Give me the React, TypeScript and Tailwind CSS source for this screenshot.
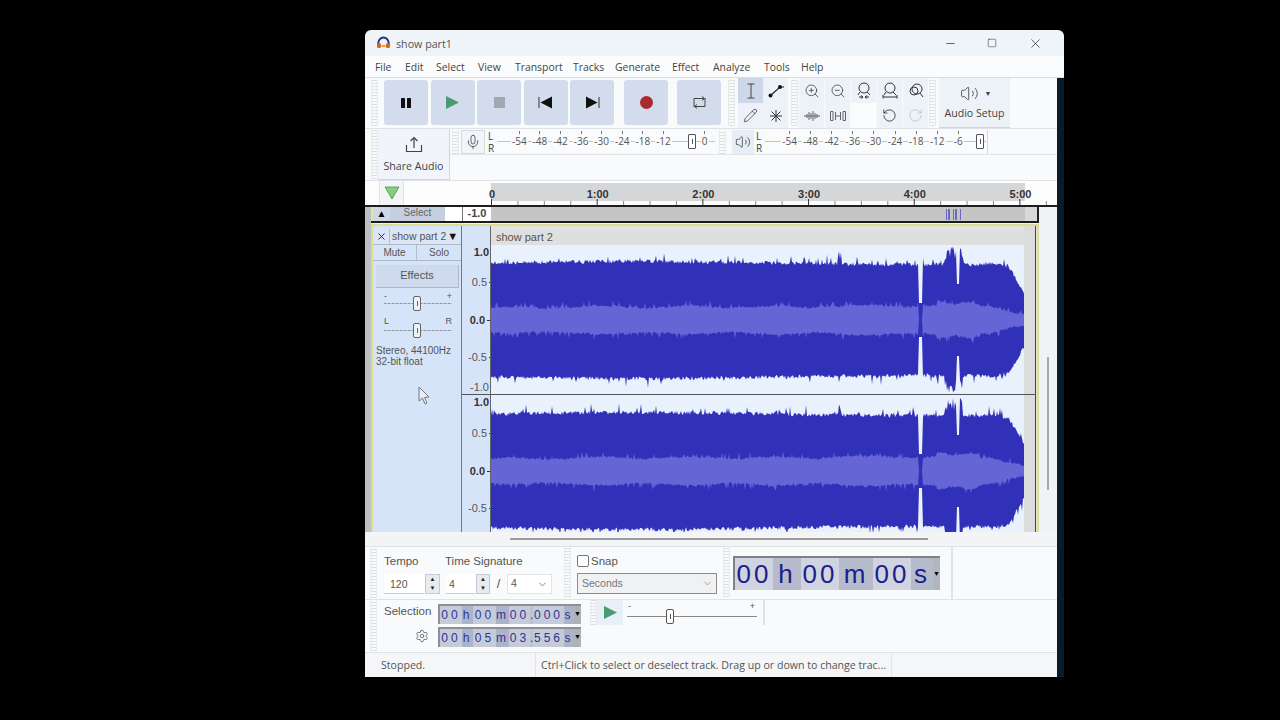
import React from 'react';
import { Mic, Pencil, RotateCcw, RotateCw, Settings, Volume2, X, ZoomIn, ZoomOut, ChevronDown, Square, Minus } from 'lucide-react';

const menus = [
  { label: 'File', w: 30 },
  { label: 'Edit', w: 31 },
  { label: 'Select', w: 42 },
  { label: 'View', w: 37 },
  { label: 'Transport', w: 58 },
  { label: 'Tracks', w: 42 },
  { label: 'Generate', w: 57 },
  { label: 'Effect', w: 41 },
  { label: 'Analyze', w: 51 },
  { label: 'Tools', w: 37 },
  { label: 'Help', w: 30 },
];

function mulberry(seed: number) {
  return () => {
    seed |= 0;
    seed = (seed + 0x6d2b79f5) | 0;
    let t = Math.imul(seed ^ (seed >>> 15), 1 | seed);
    t = (t + Math.imul(t ^ (t >>> 7), 61 | t)) ^ t;
    return ((t ^ (t >>> 14)) >>> 0) / 4294967296;
  };
}

// rough peak + rms shape of the song, one value per pixel column
function buildWave(seed: number, cy: number) {
  const r = mulberry(seed);
  const outer = (i: number, side: number) => {
    let a = 55 + Math.sin(i / 90) * 1.5 + r() * 4;
    if (r() < 0.08) a += 2 + r() * 6;
    if (i > 347 && i < 351 && side < 0) a += 12 * r();
    if (i >= 428 && i <= 431) return 17;
    if (i >= 454 && i <= 471) a = 60 + r() * 14;
    if (i >= 466 && i <= 468) a = 36;
    if (i > 505) a -= (i - 505) * 0.25;
    if (i > 518) a -= (i - 518) * 1.5;
    return a;
  };
  const inner = (i: number) => {
    let a = 11 + r() * 2.5 + Math.sin(i / 14) * 1;
    if (i > 60) a += 1;
    if (i > 330) a += 1;
    if (r() < 0.1) a += 2 + r() * 4;
    if (i >= 428 && i <= 431) return 0;
    if (i > 445 && i < 490) a += 2 + Math.sin(i / 5) * 1.5;
    if (i > 500) a -= (i - 500) * 0.28;
    return Math.max(a, 2);
  };
  let up = '';
  let down = '';
  let rUp = '';
  let rDown = '';
  for (let i = 0; i < 534; i++) {
    up += `${i === 0 ? 'M' : 'L'}${i} ${(cy - outer(i, -1)).toFixed(1)} `;
    down = `L${i} ${(cy + outer(i, 1)).toFixed(1)} ` + down;
    rUp += `${i === 0 ? 'M' : 'L'}${i} ${(cy - inner(i)).toFixed(1)} `;
    rDown = `L${i} ${(cy + inner(i)).toFixed(1)} ` + rDown;
  }
  return { peak: up + down + 'Z', rms: rUp + rDown + 'Z' };
}

const Wave = ({ seed, cy, h }: { seed: number; cy: number; h: number }) => {
  const { peak, rms } = React.useMemo(() => buildWave(seed, cy), [seed, cy]);
  return (
    <svg width={534} height={h} viewBox={`0 0 534 ${h}`} className="block bg-[#e9f1fc]">
      <path d={peak} fill="#3030b9" />
      <path d={rms} fill="#6565d6" />
    </svg>
  );
};

const Grip = ({ h = 'h-[46px]' }: { h?: string }) => (
  <div className={`w-[7px] shrink-0 bg-[repeating-linear-gradient(0deg,#dcdfe3_0px,#dcdfe3_1px,#f8fafc_1px,#f8fafc_3px)] border-x border-[#e8eaee] ${h}`} />
);

const TransportBtn = ({ children, className = '' }: { children: React.ReactNode; className?: string }) => (
  <div className={`w-11 h-[45px] rounded-[3px] bg-[#d3dcec] flex items-center justify-center shrink-0 ${className}`}>{children}</div>
);

const ToolBtn = ({ children, active }: { children?: React.ReactNode; active?: boolean }) => (
  <div className={`w-[25px] h-[25px] flex items-center justify-center ${active ? 'bg-[#cdd7ea]' : 'bg-[#edf2f9]'}`}>{children}</div>
);

const Meter = ({ labels, w, slider, pad }: { labels: string[]; w: string; slider: string; pad: string }) => (
  <div className={`relative h-[22px] ${w} bg-[#fafbfc]`}>
    <div className="absolute left-0 right-0 top-[11px] h-px bg-[#c2c4c7]" />
    <div className={`relative flex ${pad}`}>
      {labels.map((l, i) => (
        <div key={i} className="w-[21.1px] flex flex-col items-center pt-[1px]">
          <div className={`w-px h-[3px] ${l ? 'bg-[#777]' : 'bg-transparent'}`} />
          <span className="text-[10px] leading-[14px] text-[#555] bg-[#fafbfc] px-px">{l}</span>
        </div>
      ))}
    </div>
    <div className={`absolute top-[4px] w-[8px] h-[15px] border border-[#555] rounded-[1px] bg-white flex items-center justify-center ${slider}`}>
      <div className="w-px h-[5px] bg-[#555]" />
    </div>
  </div>
);

const LR = () => (
  <div className="w-[9px] text-[10px] leading-[12px] text-[#444] flex flex-col">
    <span>L</span>
    <span>R</span>
  </div>
);

const PanelSlider = ({ mt }: { mt: string }) => (
  <div className={`relative h-[16px] mx-[11px] w-[68px] ${mt}`}>
    <div className="absolute left-0 right-0 top-[8px] h-px bg-[repeating-linear-gradient(90deg,#8f959c_0px,#8f959c_2px,#b8c2d0_2px,#b8c2d0_4px)]" />
    <div className="absolute left-[29px] top-[1px] w-[8px] h-[15px] rounded-[2px] border border-[#666] bg-[#eef2f7] flex items-center justify-center">
      <div className="w-px h-[5px] bg-[#666]" />
    </div>
  </div>
);

const RulerLabel = ({ text, mt = '', strong, tick }: { text: string; mt?: string; strong?: boolean; tick?: string }) => (
  <div className={`h-[14px] flex items-center justify-end ${mt}`}>
    <span className={`text-[11px] leading-[14px] pr-[2px] ${strong ? 'font-bold text-[#333]' : 'text-[#555]'}`}>{text}</span>
    {tick ? <div className={`h-px bg-[#333] ${tick}`} /> : null}
  </div>
);

const seg = {
  light: 'bg-[#d0d3e0]',
  dark: 'bg-[#b5bbcb]',
};

const bigSegs = [
  { t: '00', w: 'w-[38px]', c: seg.light },
  { t: 'h', w: 'w-[28px]', c: seg.dark },
  { t: '00', w: 'w-[38px]', c: seg.light },
  { t: 'm', w: 'w-[34px]', c: seg.dark },
  { t: '00', w: 'w-[38px]', c: seg.light },
  { t: 's', w: 'w-[22px]', c: seg.dark },
];

const smallRow = (v: string[]) => [
  { t: v[0], w: 'w-[22px]', c: 'bg-[#c6cbd9]' },
  { t: 'h', w: 'w-[11px]', c: 'bg-[#adb4c9]' },
  { t: v[1], w: 'w-[23px]', c: 'bg-[#c6cbd9]' },
  { t: 'm', w: 'w-[13px]', c: 'bg-[#adb4c9]' },
  { t: v[2], w: 'w-[21px]', c: 'bg-[#c6cbd9]' },
  { t: '.', w: 'w-[3px]', c: 'bg-[#bcc2d2]' },
  { t: v[3], w: 'w-[31px]', c: 'bg-[#c6cbd9]' },
  { t: 's', w: 'w-[10px]', c: 'bg-[#adb4c9]' },
];

const SmallTime = ({ v }: { v: string[] }) => (
  <div className="flex h-[20px] w-[143px] border-t-2 border-l-2 border-[#8d8f95] bg-[#aeb1b8]">
    {smallRow(v).map((s, i) => (
      <span key={i} className={`${s.w} ${s.c} text-center text-[12px] leading-[18px] tracking-[3px] text-[#2a3595] whitespace-nowrap`}>{s.t}</span>
    ))}
    <span className="flex-1 flex items-center justify-center text-[7px] text-black leading-none pb-[3px]">▼</span>
  </div>
);

const ticks = Array.from({ length: 22 }, (_, i) => i);

export default function App() {
  return (
    <div className="w-[1280px] h-[720px] bg-black overflow-hidden pt-[30px] pl-[365px] font-['Open_Sans',sans-serif]">
      <div className="w-[699px] h-[647px] flex flex-col">
        {/* title bar */}
        <div className="h-[26px] bg-[#eef4f8] rounded-t-[6px] flex items-center pl-[11px] text-[#555]">
          <svg width="15" height="14" viewBox="0 0 15 14">
            <path d="M2 9 C2 -1 13 -1 13 9" fill="none" stroke="#22307e" strokeWidth="2" />
            <rect x="1" y="7" width="4" height="5" rx="1.5" fill="#d9641e" />
            <rect x="10" y="7" width="4" height="5" rx="1.5" fill="#d9641e" />
            <rect x="5.5" y="9" width="4" height="2" fill="#e4a32b" />
          </svg>
          <span className="ml-[5px] text-[10.7px] pt-[3px]">show part1</span>
          <div className="ml-auto flex items-center text-[#333]">
            <Minus size={13} strokeWidth={1.4} />
            <Square size={10} strokeWidth={1.3} className="ml-[30px]" />
            <X size={15} strokeWidth={1.2} className="ml-[31px] mr-[21px]" />
          </div>
        </div>
        {/* menu */}
        <div className="h-[22px] bg-[#fbfcfd] border-b border-[#d8dce0] flex items-center pl-[10px] pt-[3px] text-[10.4px] text-[#444]">
          {menus.map(m => (
            <span key={m.label} style={{ width: m.w }}>{m.label}</span>
          ))}
        </div>

        <div className="flex">
          <div className="w-[692px] flex flex-col bg-[#f8fafc]">
            {/* transport and tools */}
            <div className="h-[51px] flex border-b border-[#dfe2e6]">
              <div className="ml-[6px] mt-[2px]"><Grip /></div>
              <div className="ml-[6px] mt-[2px] flex gap-[2.5px]">
                <TransportBtn>
                  <svg width="12" height="12" viewBox="0 0 12 12"><rect x="1" y="1" width="4" height="10" rx="0.5" fill="#111" /><rect x="7" y="1" width="4" height="10" rx="0.5" fill="#111" /></svg>
                </TransportBtn>
                <TransportBtn>
                  <svg width="15" height="15" viewBox="0 0 15 15"><path d="M1 1 L14 7.5 L1 14 Z" fill="#4c9a70" /></svg>
                </TransportBtn>
                <TransportBtn>
                  <div className="w-[11px] h-[11px] bg-[#a3a7b1]" />
                </TransportBtn>
                <TransportBtn>
                  <svg width="15" height="13" viewBox="0 0 15 13"><rect x="0.5" y="1" width="1" height="11" fill="#333" /><path d="M2.5 6.5 L14 0.5 V12.5 Z" fill="#111" /></svg>
                </TransportBtn>
                <TransportBtn>
                  <svg width="15" height="13" viewBox="0 0 15 13"><path d="M1 0.5 L12.5 6.5 L1 12.5 Z" fill="#111" /><rect x="13.5" y="1" width="1" height="11" fill="#333" /></svg>
                </TransportBtn>
              </div>
              <TransportBtn className="ml-[10px] mt-[2px]">
                <div className="w-[13px] h-[13px] rounded-full bg-[#a92a2c]" />
              </TransportBtn>
              <TransportBtn className="ml-[9px] mt-[2px]">
                <svg width="15" height="15" viewBox="0 0 15 15" fill="none" stroke="#444" strokeWidth="1">
                  <path d="M2 12 V3.5 H12" /><path d="M10 1.5 L12.5 3.5 L10 5.5" />
                  <path d="M13 3 V11.5 H3" /><path d="M5 9.5 L2.5 11.5 L5 13.5" />
                </svg>
              </TransportBtn>
              <div className="ml-[7px] mt-[2px]"><Grip /></div>
              <div className="ml-[3px] grid grid-cols-[25px_25px] content-start">
                <ToolBtn active>
                  <svg width="10" height="16" viewBox="0 0 10 16" fill="none" stroke="#444" strokeWidth="1"><path d="M1.5 1 H8.5 M5 1 V15 M1.5 15 H8.5" /></svg>
                </ToolBtn>
                <ToolBtn>
                  <svg width="18" height="16" viewBox="0 0 18 16"><path d="M3 13 L13 4 H17" stroke="#222" strokeWidth="1.2" fill="none" /><circle cx="3.5" cy="12.5" r="2" fill="#111" /><circle cx="13" cy="4" r="2" fill="#111" /></svg>
                </ToolBtn>
                <ToolBtn><Pencil size={15} strokeWidth={1.2} className="text-[#333]" /></ToolBtn>
                <ToolBtn>
                  <svg width="14" height="14" viewBox="0 0 14 14" stroke="#333" strokeWidth="1"><path d="M7 1 V13 M1 7 H13 M2.5 2.5 L11.5 11.5 M11.5 2.5 L2.5 11.5" /></svg>
                </ToolBtn>
              </div>
              <div className="ml-[3px] mt-[2px]"><Grip /></div>
              <div className="ml-px grid grid-cols-[25px_25px_25px_25px_25px] gap-x-px content-start">
                <ToolBtn><ZoomIn size={16} strokeWidth={1.1} className="text-[#333]" /></ToolBtn>
                <ToolBtn><ZoomOut size={16} strokeWidth={1.1} className="text-[#333]" /></ToolBtn>
                <ToolBtn>
                  <svg width="16" height="17" viewBox="0 0 16 17" fill="none" stroke="#333" strokeWidth="1"><circle cx="8" cy="6" r="5" /><path d="M11 10 L14 13 M4 10 L2 13" /><path d="M3 15 H7 M9 15 H13 M5 13.5 L7 15 L5 16.5 M11 13.5 L9 15 L11 16.5" /></svg>
                </ToolBtn>
                <ToolBtn>
                  <svg width="16" height="17" viewBox="0 0 16 17" fill="none" stroke="#333" strokeWidth="1"><circle cx="8" cy="6" r="5" /><path d="M11 10 L14 13 M4 10 L2 13" /><path d="M1 15 H15 M1 13 V16.5 M15 13 V16.5" /></svg>
                </ToolBtn>
                <ToolBtn>
                  <svg width="16" height="16" viewBox="0 0 16 16" fill="none" stroke="#333" strokeWidth="1"><circle cx="9" cy="6" r="5" /><circle cx="6" cy="8" r="4" /><path d="M12 10 L15 14" /></svg>
                </ToolBtn>
                <ToolBtn>
                  <svg width="16" height="12" viewBox="0 0 16 12" fill="none" stroke="#666" strokeWidth="1"><path d="M0 6 H16 M3 4 V8 M5 2 V10 M7 3 V9 M9 1 V11 M11 3 V9 M13 4 V8" /></svg>
                </ToolBtn>
                <ToolBtn>
                  <svg width="16" height="12" viewBox="0 0 16 12" fill="none" stroke="#666" strokeWidth="1"><path d="M3 1.5 H0.5 V10.5 H3 V1.5 M13 1.5 H15.5 V10.5 H13 V1.5" /><path d="M5.5 2 V10 M10.5 2 V10 M5.5 6 H10.5" /></svg>
                </ToolBtn>
                <div className="w-[25px] h-[25px] bg-[#fbfcfd]" />
                <ToolBtn><RotateCcw size={15} strokeWidth={1.4} className="text-[#333]" /></ToolBtn>
                <ToolBtn><RotateCw size={15} strokeWidth={1.2} className="text-[#b8bcc2]" /></ToolBtn>
              </div>
              <div className="ml-px mt-[2px]"><Grip /></div>
              <div className="ml-[3px] w-[71px] h-[50px] bg-[#edf2f9] border-b border-[#cfd6e0] flex flex-col items-center pt-[6px]">
                <div className="flex items-center gap-[6px] text-[#444] pl-[2px]">
                  <Volume2 size={19} strokeWidth={1.1} />
                  <span className="text-[7px] leading-none">▼</span>
                </div>
                <span className="text-[10.6px] leading-[15px] mt-[3px] text-[#444]">Audio Setup</span>
              </div>
            </div>

            {/* share and meters */}
            <div className="h-[52px] flex border-b border-[#dfe2e6]">
              <div className="ml-[6px] mt-px"><Grip h="h-[49px]" /></div>
              <div className="w-[72px] h-[51px] bg-[#f1f5fb] border-r border-b border-[#cfd6e0] flex flex-col items-center pt-[7px] text-[#444]">
                <svg width="18" height="17" viewBox="0 0 18 17" fill="none" stroke="#444" strokeWidth="1.2">
                  <path d="M9 12 V2 M5.5 5 L9 1.5 L12.5 5" />
                  <path d="M1.5 9 V15.5 H16.5 V9" />
                </svg>
                <span className="text-[10.6px] leading-[15px] mt-[6px]">Share Audio</span>
              </div>
              <div className="h-[26px] flex items-start pt-[1px] border-b border-[#e2e5e9] flex-1">
                <div className="ml-[2px]"><Grip h="h-[24px]" /></div>
                <div className="ml-[2px] w-6 h-[24px] bg-[#f1f4f8] border border-[#d5dae0] flex items-center justify-center">
                  <Mic size={16} strokeWidth={1.1} className="text-[#333]" />
                </div>
                <div className="ml-[3px]"><LR /></div>
                <Meter
                  w="w-[218px]"
                  pad="pl-[12px]"
                  slider="left-[191px]"
                  labels={['-54', '-48', '-42', '-36', '-30', '-24', '-18', '-12', '', '0']}
                />
                <div className="ml-[4px]"><Grip h="h-[24px]" /></div>
                <div className="ml-[6px] w-[22px] h-[24px] bg-[#e7edf6] flex items-center justify-center">
                  <Volume2 size={16} strokeWidth={1.1} className="text-[#333]" />
                </div>
                <div className="ml-[2px]"><LR /></div>
                <Meter
                  w="w-[221px]"
                  pad="pl-[14px]"
                  slider="left-[211px]"
                  labels={['-54', '-48', '-42', '-36', '-30', '-24', '-18', '-12', '-6']}
                />
                <div className="ml-[1px] w-px h-[24px] bg-[#d5d8dc]" />
              </div>
            </div>

            {/* timeline */}
            <div className="relative h-[26px] flex bg-[#fdfdfe] border-b-2 border-[#1e1e1e]">
              <div className="w-[15px] border-r border-[#dfe2e6]" />
              <div className="w-[24px] bg-[#f4f5f6] flex items-center justify-center border-r border-[#dfe2e6]">
                <svg width="16" height="14" viewBox="0 0 16 14"><path d="M1 1 H15 L8 13 Z" fill="#7fd07b" stroke="#5a8a5a" strokeWidth="0.8" /></svg>
              </div>
              <div className="w-[87px]" />
              <div className="w-[534px] h-[18px] mt-[2px] bg-[#d5d6d7] flex text-[11px] font-bold leading-[23px] text-[#333] font-['Liberation_Sans',sans-serif]">
                {['0', '1:00', '2:00', '3:00', '4:00', '5:00'].map(t => (
                  <div key={t} className="w-[105.7px] shrink-0"><span className="inline-block -translate-x-1/2 ml-px">{t}</span></div>
                ))}
              </div>
              <svg className="absolute left-[126px] top-[18px]" width="566" height="6">
                {ticks.map(i => (
                  <rect key={i} x={i * 26.42} y={i % 4 === 0 ? 0 : 2} width="1" height={i % 4 === 0 ? 6 : 4} fill={i % 4 === 0 ? '#333' : '#888'} />
                ))}
              </svg>
            </div>

            {/* tracks */}
            <div className="h-[325px] flex">
              <div className="w-[6px] bg-[#b9bfc2]" />
              <div className="w-[668px] flex flex-col bg-[#e8e8e8]">
                <div className="relative h-[16px] flex border-b-2 border-[#1a1a1a] text-[10px] leading-[12px] font-['Liberation_Sans',sans-serif]">
                  <div className="w-[2px] bg-[#e3e3b0]" />
                  <div className="w-[17px] bg-[#cfd8e8] flex items-center justify-center text-[10px] text-black">▲</div>
                  <div className="w-[55px] bg-[#c5cfe0] text-center text-[#666]">Select</div>
                  <div className="w-[17px] bg-white" />
                  <div className="w-px bg-[#777]" />
                  <div className="w-[28px] bg-white text-center text-[11px] font-bold text-[#444]">-1.0</div>
                  <div className="w-[534px] bg-[#c5c5c5]" />
                  <div className="w-[12px] bg-[#d8d8d8]" />
                  <div className="w-[2px] bg-[#222]" />
                  <svg className="absolute left-[574px] top-0" width="18" height="14">
                    {[1, 3, 4, 8, 10, 11, 15].map(x => (
                      <rect key={x} x={x} y="2" width="1" height="11" fill="#6a6ac6" />
                    ))}
                  </svg>
                </div>
                <div className="h-px bg-[#f2f2f2]" />
                <div className="h-[308px] flex border-x-2 border-t-2 border-[#dcdc92] bg-[#e2e2e2]">
                  {/* track panel */}
                  <div className="w-[89px] bg-[#d6e4f9] border-r border-[#777] flex flex-col font-['Liberation_Sans',sans-serif] text-[#555]">
                    <div className="h-[3px]" />
                    <div className="h-[16px] flex border-b border-[#aeb7c6] bg-[#dbe5f6]">
                      <div className="w-[17px] flex items-center justify-center border-r border-[#b5bdcb]"><X size={11} strokeWidth={2} className="text-[#222]" /></div>
                      <div className="flex-1 text-[10.5px] leading-[15px] pl-[2px] whitespace-nowrap">show part 2<span className="text-[#111] text-[11px] ml-[1px]">▼</span></div>
                    </div>
                    <div className="h-[16px] flex border-b border-[#aeb7c6] text-[10px] leading-[15px]">
                      <div className="w-[44px] text-center border-r border-[#b5bdcb]">Mute</div>
                      <div className="flex-1 text-center">Solo</div>
                    </div>
                    <div className="mx-[3px] mt-[4px] h-[23px] w-[83px] bg-[#cfdaee] border-r border-b border-[#aeb7c6] text-center text-[11px] leading-[21px]">Effects</div>
                    <div className="flex justify-between px-[11px] text-[9px] leading-[8px] mt-[4px] w-[90px]"><span>-</span><span>+</span></div>
                    <PanelSlider mt="-mt-[5px]" />
                    <div className="flex justify-between px-[11px] text-[9px] leading-[10px] mt-[5px] w-[90px]"><span>L</span><span>R</span></div>
                    <PanelSlider mt="-mt-[4px]" />
                    <div className="pl-[3px] mt-[7px] text-[10px] leading-[11px] whitespace-nowrap">
                      Stereo, 44100Hz
                      <br />
                      32-bit float
                    </div>
                  </div>
                  {/* amplitude ruler */}
                  <div className="w-[29px] bg-[#d6e4f9] flex flex-col font-['Liberation_Sans',sans-serif]">
                    <div className="h-[19px]" />
                    <div className="h-[149px]">
                      <RulerLabel text="1.0" strong />
                      <RulerLabel text="0.5" mt="mt-[16px]" tick="w-[2px]" />
                      <RulerLabel text="0.0" mt="mt-[24px]" strong tick="w-[4px]" />
                      <RulerLabel text="-0.5" mt="mt-[23px]" tick="w-[2px]" />
                      <RulerLabel text="-1.0" mt="mt-[16px]" />
                    </div>
                    <div className="h-px bg-[#555]" />
                    <div className="h-[137px]">
                      <RulerLabel text="1.0" strong />
                      <RulerLabel text="0.5" mt="mt-[17px]" tick="w-[2px]" />
                      <RulerLabel text="0.0" mt="mt-[24px]" strong tick="w-[4px]" />
                      <RulerLabel text="-0.5" mt="mt-[23px]" tick="w-[2px]" />
                    </div>
                  </div>
                  {/* clip */}
                  <div className="w-[534px] flex flex-col border-l border-[#666] -ml-px">
                    <div className="h-[4px]" />
                    <div className="h-[15px] bg-[#dfdfdf] rounded-t-[4px] text-[11px] leading-[14px] text-[#555] pl-[5px] font-['Liberation_Sans',sans-serif]">show part 2</div>
                    <Wave seed={11} cy={75} h={149} />
                    <div className="h-px bg-[#555]" />
                    <Wave seed={29} cy={76} h={137} />
                  </div>
                  <div className="w-[12px] bg-[#dcdcdc] border-r border-[#444] flex flex-col">
                    <div className="h-[168px]" />
                    <div className="h-px bg-[#555]" />
                  </div>
                </div>
              </div>
              <div className="w-[18px] bg-[#f1f2f3] flex flex-col items-center">
                <div className="h-[150px]" />
                <div className="w-[2px] h-[133px] bg-[#a8a8a8]" />
              </div>
            </div>

            {/* horizontal scroll */}
            <div className="h-[15px] bg-[#f2f4f6] border-b border-[#dfe2e6] flex items-center pl-[145px]">
              <div className="w-[418px] h-[2px] bg-[#9b9b9b]" />
            </div>

            {/* time signature, snap, time */}
            <div className="h-[53px] flex border-b border-[#dfe2e6] text-[#555]">
              <div className="ml-[5px] mt-[1px]"><Grip h="h-[50px]" /></div>
              <div className="w-[187px] pl-[7px] pt-[6px] font-['Liberation_Sans',sans-serif]">
                <div className="flex text-[11.5px] leading-[16px]">
                  <span className="w-[61px]">Tempo</span>
                  <span>Time Signature</span>
                </div>
                <div className="flex items-center mt-[5px] text-[10.5px]">
                  <div className="w-[40px] h-[20px] bg-white border-b border-[#ccc] pl-[6px] leading-[20px]">120</div>
                  <div className="w-[15px] h-[20px] ml-[1px] bg-[#e7eaef] border border-[#c7cbd1] flex flex-col items-center justify-center text-[6px] leading-[9px] text-[#222]"><span>▲</span><span>▼</span></div>
                  <div className="w-[29px] h-[20px] ml-[6px] bg-white border-b border-[#ccc] pl-[3px] leading-[20px]">4</div>
                  <div className="w-[14px] h-[20px] ml-px bg-[#e7eaef] border border-[#c7cbd1] flex flex-col items-center justify-center text-[6px] leading-[9px] text-[#222]"><span>▲</span><span>▼</span></div>
                  <span className="w-[17px] text-center text-[13px]">/</span>
                  <div className="w-[45px] h-[20px] bg-white border border-[#e2e4e8] flex items-center justify-between pl-[3px] pr-[3px]">4<ChevronDown size={11} className="text-[#777]" /></div>
                </div>
              </div>
              <Grip h="h-[50px]" />
              <div className="w-[152px] pl-[6px] pt-[7px] font-['Liberation_Sans',sans-serif]">
                <div className="flex items-center text-[11.5px] leading-[14px]">
                  <div className="w-[12px] h-[12px] border border-[#777] rounded-[2px] bg-white mr-[2px]" />
                  Snap
                </div>
                <div className="mt-[5px] w-[140px] h-[21px] border border-[#8c8c8c] bg-[#f0f1f2] flex items-center justify-between pl-[4px] pr-[3px] text-[10.5px] text-[#777]">
                  Seconds<ChevronDown size={11} className="text-[#999]" />
                </div>
              </div>
              <Grip h="h-[50px]" />
              <div className="ml-[3px] mt-[9px] w-[207px] h-[34px] flex border-t-2 border-l-2 border-[#7f8187] bg-[#b7bbc7] font-['Liberation_Sans',sans-serif]">
                {bigSegs.map((s, i) => (
                  <span key={i} className={`${s.w} ${s.c} text-center text-[26px] leading-[33px] tracking-[3px] text-[#1d1d8c]`}>{s.t}</span>
                ))}
                <span className="flex-1 bg-[#b2b6c2] flex items-center justify-center text-[7px] text-black">▼</span>
              </div>
              <div className="ml-[11px] w-[2px] border-x border-[#dfe2e6]" />
            </div>

            {/* selection and play at speed */}
            <div className="h-[53px] flex border-b border-[#dfe2e6] text-[#555] font-['Liberation_Sans',sans-serif]">
              <div className="ml-[5px] mt-[1px]"><Grip h="h-[50px]" /></div>
              <div className="w-[61px] pl-[7px] pt-[3px]">
                <div className="text-[11.5px] leading-[16px]">Selection</div>
                <div className="flex justify-end mt-[10px] pr-[9px]">
                  <Settings size={14} strokeWidth={1.2} className="text-[#444]" />
                </div>
              </div>
              <div className="flex flex-col gap-[3px] pt-[4px]">
                <SmallTime v={['00', '00', '00', '000']} />
                <SmallTime v={['00', '05', '03', '556']} />
              </div>
              <div className="ml-[9px]"><Grip h="h-[25px]" /></div>
              <div className="w-[26px] h-[25px] bg-[#e9eff7] flex items-center justify-center">
                <svg width="15" height="15" viewBox="0 0 15 15"><path d="M1 1 L14 7.5 L1 14 Z" fill="#4c9a70" /></svg>
              </div>
              <div className="relative ml-[4px] w-[130px] h-[25px]">
                <span className="absolute left-[1px] top-[2px] text-[9px] leading-[9px]">-</span>
                <span className="absolute right-[2px] top-[2px] text-[9px] leading-[9px]">+</span>
                <div className="absolute left-0 right-0 top-[16px] h-px bg-[#888]" />
                <div className="absolute left-[39px] top-[9px] w-[8px] h-[15px] rounded-[2px] border border-[#555] bg-white flex items-center justify-center">
                  <div className="w-px h-[5px] bg-[#555]" />
                </div>
              </div>
              <div className="ml-[6px] w-[2px] h-[25px] border-x border-[#dfe2e6]" />
            </div>

            {/* status bar */}
            <div className="h-[24px] flex items-center text-[10.6px] text-[#555] bg-[#f4f6f8]">
              <span className="w-[170px] pl-[16px] leading-[26px]">Stopped.</span>
              <span className="whitespace-nowrap w-[357px] h-full leading-[24px] pl-[5px] border-x border-[#e2e5e9]">Ctrl+Click to select or deselect track. Drag up or down to change trac...</span>
            </div>
          </div>
          <div className="w-[7px] bg-[#0b1c28]" />
        </div>
      </div>
      {/* mouse pointer */}
      <svg className="absolute left-[418px] top-[386px]" width="13" height="19" viewBox="0 0 13 19">
        <path d="M1 1 L1 15 L4.5 12 L7 18 L9 17 L6.5 11.5 L11 11 Z" fill="#e8eef7" stroke="#777" strokeWidth="1" />
      </svg>
    </div>
  );
}
